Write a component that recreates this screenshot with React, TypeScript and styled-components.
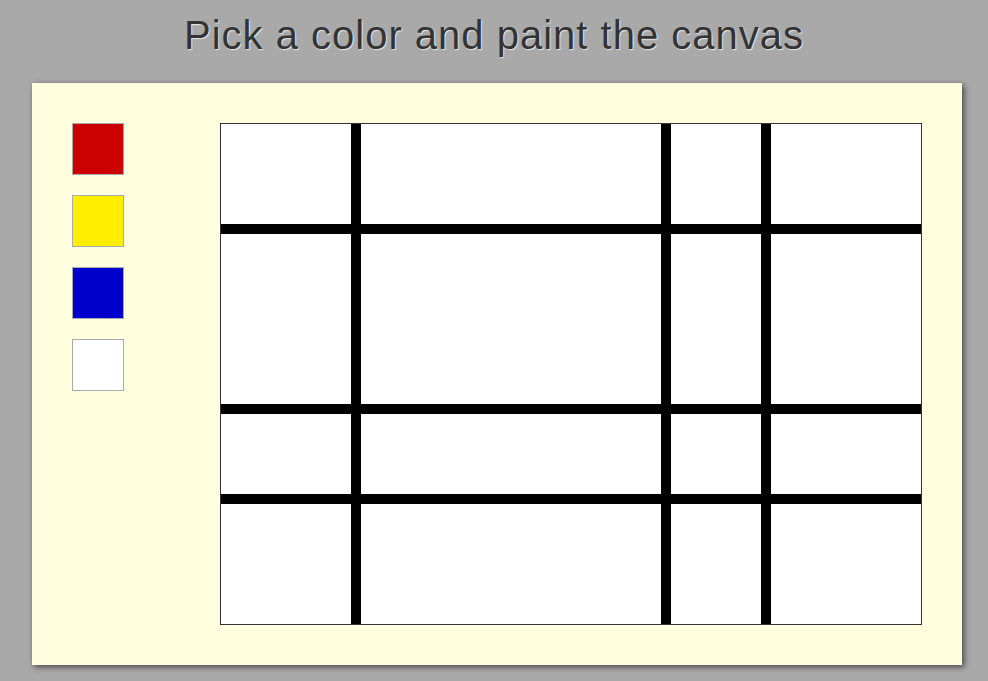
import React, { useState } from "react";
import styled, { createGlobalStyle } from "styled-components";

const GlobalStyle = createGlobalStyle`
  html, body {
    margin: 0;
    padding: 0;
    background: #a9a9a9;
  }
  body {
    font-family: "Liberation Sans", Arial, sans-serif;
  }
`;

const Page = styled.div`
  width: 988px;
  height: 681px;
  overflow: hidden;
`;

const Title = styled.h1`
  margin: 13px 0 0 0;
  font-size: 40px;
  font-weight: 400;
  line-height: normal;
  letter-spacing: 1px;
  text-align: center;
  color: #333;
  text-shadow: 1px 1px 1px #e8e8e8;
`;

const Panel = styled.div`
  box-sizing: border-box;
  margin: 25px 0 0 32px;
  width: 930px;
  height: 582px;
  padding: 40px;
  background: #ffffe0;
  box-shadow: 2px 2px 6px rgba(0, 0, 0, 0.6);
  display: flex;
  gap: 96px;
`;

const Palette = styled.div`
  display: flex;
  flex-direction: column;
  gap: 20px;
`;

const Swatch = styled.div<{ $color: string }>`
  width: 50px;
  height: 50px;
  border: 1px solid #aaa;
  background: ${(p) => p.$color};
  cursor: pointer;
`;

const Canvas = styled.div`
  width: 700px;
  height: 500px;
  border: 1px solid #333;
  background: #000;
  display: grid;
  grid-template-columns: 130px 300px 90px 150px;
  grid-template-rows: 100px 170px 80px 120px;
  gap: 10px;
`;

const Cell = styled.div<{ $color: string }>`
  background: ${(p) => p.$color};
  cursor: pointer;
`;

const colors = ["#cc0000", "#ffee00", "#0000cc", "#ffffff"];

const App = () => {
  const [selected, setSelected] = useState("#ffffff");
  const [cells, setCells] = useState<string[]>(Array(16).fill("#ffffff"));

  const paint = (i: number) => {
    const next = [...cells];
    next[i] = selected;
    setCells(next);
  };

  return (
    <Page>
      <GlobalStyle />
      <Title>Pick a color and paint the canvas</Title>
      <Panel>
        <Palette>
          {colors.map((c) => (
            <Swatch key={c} $color={c} onClick={() => setSelected(c)} />
          ))}
        </Palette>
        <Canvas>
          {cells.map((c, i) => (
            <Cell key={i} $color={c} onClick={() => paint(i)} />
          ))}
        </Canvas>
      </Panel>
    </Page>
  );
};

export default App;
